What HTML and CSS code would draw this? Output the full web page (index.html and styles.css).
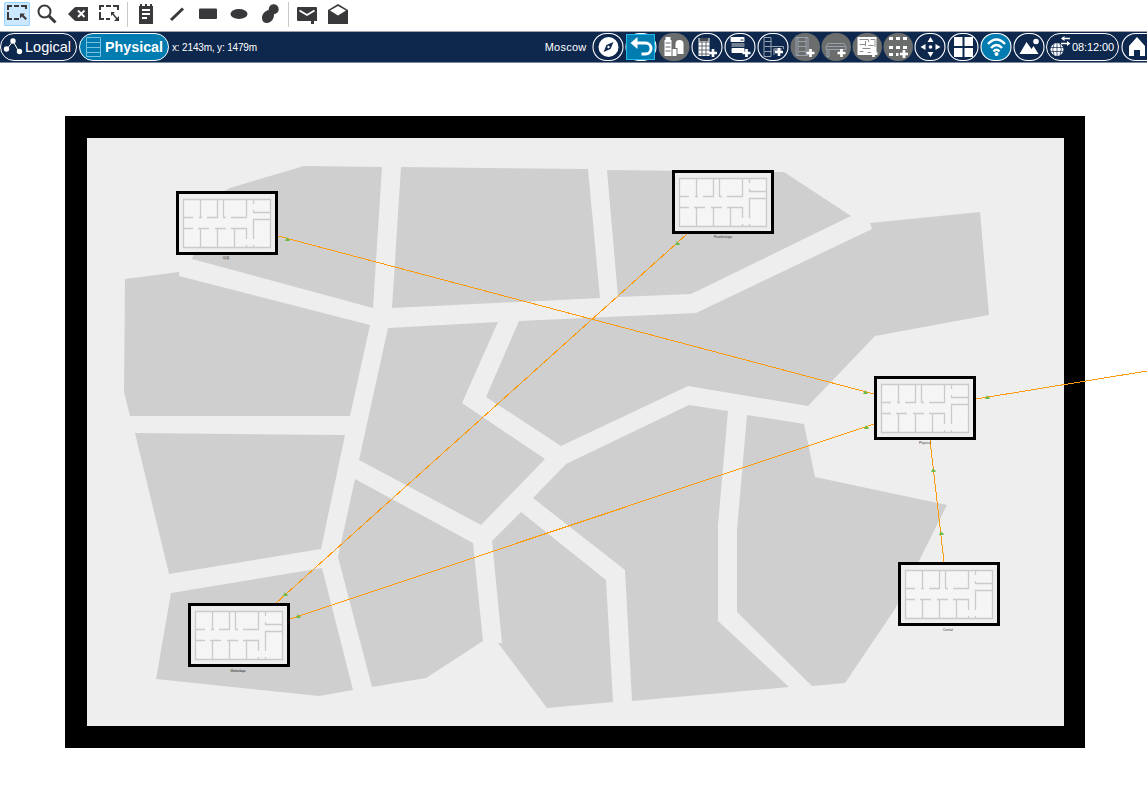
FILE: index.html
```html
<!DOCTYPE html>
<html lang="en">
<head>
<meta charset="utf-8">
<title>Physical workspace</title>
<link rel="stylesheet" href="styles.css">
</head>
<body>
<header class="tools">
  <button class="tool selected" aria-label="Select"><svg width="24" height="24" viewBox="5 2 24 24"><path class="line" d="M8 10V6H12M14 6H19M21 6H26V9M8 12V16M8 16V19H12M14 19H19"/><path class="dark" d="M20 13.5H25L23.5 15L27 18.5L25.5 20L22 16.5L20 18.5Z"/></svg></button>
  <button class="tool" aria-label="Inspect"><svg width="24" height="24" viewBox="35 2 24 24"><circle class="line" cx="44.5" cy="11.5" r="6"/><path class="line thick" d="M49 16L55.5 22.5"/></svg></button>
  <button class="tool" aria-label="Delete"><svg width="24" height="24" viewBox="66 2 24 24"><path class="dark" d="M68 14L74 8Q75 7 76 7H88V21H76Q75 21 74 20Z"/><path class="cut" d="M78 10.5L84.500 17M84.500 10.500L78 17"/></svg></button>
  <button class="tool" aria-label="Resize"><svg width="24" height="24" viewBox="97 2 24 24"><path class="line" d="M100 10V6H104M106 6H111M113 6H118V10M100 12V19H104M106 19H110"/><path class="line fine" d="M112.500 13.500L117.500 19.500"/><path class="dark" d="M111 12H115L111 16ZM119 21H114L119 16Z"/></svg></button>
  <i class="divider"></i>
  <button class="tool" aria-label="Place note"><svg width="24" height="24" viewBox="134 2 24 24"><path class="dark" d="M139 6H140V4H142V6H145V4H147V6H150V4H152V6H153V24H139Z"/><path class="cut" d="M142 10H150M142 14H150M142 18H147"/></svg></button>
  <button class="tool" aria-label="Draw line"><svg width="24" height="24" viewBox="165 2 24 24"><path class="line thick" d="M171 20L183 8.500"/></svg></button>
  <button class="tool" aria-label="Draw rectangle"><svg width="24" height="24" viewBox="196 2 24 24"><rect class="dark" x="199" y="8.500" width="18" height="10.500" rx="1"/></svg></button>
  <button class="tool" aria-label="Draw ellipse"><svg width="24" height="24" viewBox="227 2 24 24"><ellipse class="dark" cx="239" cy="14" rx="8.500" ry="5"/></svg></button>
  <button class="tool" aria-label="Draw freeform"><svg width="24" height="24" viewBox="257 2 24 24"><ellipse class="dark" cx="267" cy="16.500" rx="5.500" ry="7" transform="rotate(35 267 16.500)"/><circle class="dark" cx="272.700" cy="9.300" r="5"/></svg></button>
  <i class="divider"></i>
  <button class="tool" aria-label="Add simple PDU"><svg width="24" height="24" viewBox="295 2 24 24"><path class="dark" d="M298 7H316Q317 7 317 8V21H314V24H311V21H298Q297 21 297 20V8Q297 7 298 7Z"/><path class="cut" d="M299.500 10.500L307 15L314.500 10.500"/></svg></button>
  <button class="tool" aria-label="Add complex PDU"><svg width="24" height="24" viewBox="326 2 24 24"><path class="dark" d="M328 10L338 4L348 10V24H328Z"/><path class="white" d="M330 10.500L338 6L346 10.500L338 15.500Z"/></svg></button>
</header>
<nav class="bar">
  <button class="tab logical"><svg width="20" height="18" viewBox="3 38 20 18"><path class="wline" d="M7 49L13 41L19 52"/><circle class="white" cx="6.500" cy="49" r="2.700"/><circle class="white" cx="13" cy="41" r="2.700"/><circle class="white" cx="19.500" cy="51.500" r="2.700"/></svg>Logical</button>
  <button class="tab physical"><svg width="15" height="20" viewBox="0 0 15 20"><path class="rack" d="M.5 .5H14.500V19.500H.5ZM1 5.500H14M1 10.500H14M1 15.500H14"/></svg>Physical</button>
  <span class="coords">x: 2143m, y: 1479m</span>
  <span class="place">Moscow</span>
  <div class="actions">
    <svg class="act" viewBox="-16.5 -15 33 30"><rect class="ring" x="-15.500" y="-13.500" width="30" height="27" rx="13.500"/><circle class="white" r="10"/><path class="navy" d="M5-5L2 2L-5 5L-2-2Z"/><circle class="white" r="1.200"/></svg>
    <svg class="act" viewBox="-16.5 -15 33 30"><rect class="ring blue" x="-15.500" y="-13.500" width="30" height="27" rx="13.500"/><rect class="focus" x="-15" y="-12.500" width="28" height="25"/><path class="back" d="M-8-4H4A5.500 5.500 0 0 1 4 7H0"/><path class="white" d="M-11-4L-4-10V2Z"/></svg>
    <svg class="act" viewBox="-16.5 -15 33 30"><rect class="off" x="-16" y="-14" width="31" height="28" rx="14"/><path class="white" d="M-9-10H-4V-7H-3V9H-10V-7H-9ZM-2 2H2V9H-2ZM1-3Q1-7 5-7Q9-7 9-3V7H3V1H1Z"/><path class="grid" d="M-9-4H-4M-9 0H-4M-9 4H-4"/></svg>
    <svg class="act" viewBox="-16.5 -15 33 30"><rect class="ring" x="-15.500" y="-13.500" width="30" height="27" rx="13.500"/><path class="white" d="M-9-9H2V9H-9Z"/><path class="fill" d="M-8-9H1V-6H-8Z"/><path class="grid" d="M-9-5H2M-9-1H2M-9 3H2M-9 7H2M-5.500-6V9M-1.500-6V9"/><path class="plus" d="M5.500 2V10M1.500 6H9.500"/></svg>
    <svg class="act" viewBox="-16.5 -15 33 30"><rect class="ring" x="-15.500" y="-13.500" width="30" height="27" rx="13.500"/><rect class="white" x="-10" y="-10" width="14" height="5" rx="1"/><rect class="dim" x="-9" y="-4" width="13" height="4"/><rect class="white" x="-9" y="1" width="13" height="5" rx="1"/><path class="navyline" d="M0-7H3"/><path class="plus" d="M6 2V10M2 6H10"/></svg>
    <svg class="act" viewBox="-16.5 -15 33 30"><rect class="ring" x="-15.500" y="-13.500" width="30" height="27" rx="13.500"/><path class="thin" d="M-9.500-9.500H-2.500V9.500H-9.500ZM-9-5.500H-2M-9-.5H-2M-9 4.500H-2M-2-.5H10V2M.5 2V8"/><rect class="dim" x="0" y="1" width="8" height="4"/><path class="plus" d="M5.500 1V9M1.500 5H9.500"/></svg>
    <svg class="act small" viewBox="-15.5 -15 31 30"><rect class="off" x="-15" y="-14" width="29.500" height="28" rx="14"/><path class="thin" d="M-9.500-9.500H2.500V8.500H-9.500ZM-7.500-9V8M.5-9V8M-7-5.500H1M-7-.5H1M-7 4.500H1"/><path class="plus" d="M5 2V10M1 6H9"/></svg>
    <svg class="act small" viewBox="-15.5 -15 31 30"><rect class="off" x="-15" y="-14" width="29.500" height="28" rx="14"/><path class="thin" d="M-8.500-3.500H7.500L9.500-.5V2.500H-10.500V-.5ZM-10-.5H9M-9.500 2V9.500H-7.500V2"/><path class="plus" d="M5 2V10M1 6H9"/></svg>
    <svg class="act small" viewBox="-15.500 -15 31 30"><rect class="off" x="-15" y="-14" width="29.500" height="28" rx="14"/><rect class="white" x="-10" y="-10" width="19" height="18"/><path class="grid light" d="M-8-7.500H1V-5M3-7.500H7.500V0M-8-2.500H-2M1-1.500H6M-5 1.500H3M-8 4.500H-4M0 5.500H4M-2-6V-1"/><path class="plus" d="M6 3V10M3 6.500H10"/></svg>
    <svg class="act small" viewBox="-15.500 -15 31 30"><rect class="off" x="-15" y="-14" width="29.500" height="28" rx="14"/><path class="dots" d="M-9.500-8.500H9M-9.500 .5H9M-9.500 7.500H0"/><path class="plus" d="M5.500 3V11M1.500 7H9.500"/></svg>
    <svg class="act" viewBox="-16.5 -15 33 30"><rect class="ring" x="-15.500" y="-13.500" width="30" height="27" rx="13.500"/><path class="white" d="M0-10L3-5H-3ZM0 10L3 5H-3ZM-10 0L-5-3V3ZM10 0L5-3V3Z"/><circle class="white" r="1.800"/></svg>
    <svg class="act" viewBox="-16.5 -15 33 30"><rect class="ring" x="-15.500" y="-13.500" width="30" height="27" rx="13.500"/><path class="white" d="M-9.500-10H-1V-1H-9.500ZM1-10H9.500V-1H1ZM-9.500 1H-1V10H-9.500ZM1 1H9.500V10H1Z"/></svg>
    <svg class="act" viewBox="-16.5 -15 33 30"><rect class="ring blue" x="-15.500" y="-13.500" width="30" height="27" rx="13.500"/><path class="wave" d="M-8.500-3Q0-12 8.500-3M-5.500 1Q0-5 5.500 1M-3 4.500Q0 1 3 4.500"/><circle class="white" cy="7" r="2"/></svg>
    <svg class="act" viewBox="-16.5 -15 33 30"><rect class="ring" x="-15.500" y="-13.500" width="30" height="27" rx="13.500"/><path class="white" d="M-10 7L-3-5L2 2L4-1L9 7Z"/><circle class="white" cx="6.500" cy="-5.500" r="2.800"/></svg>
    <button class="clock"><svg width="21" height="24" viewBox="1050 36 21 24"><circle class="white" cx="1057" cy="50.500" r="6.500"/><path class="navyline globe" d="M1051 48.500H1063M1051 52.500H1063M1057 44V57M1054 45Q1051.500 50.500 1054 56M1060 45Q1062.500 50.500 1060 56"/><path class="arrows" d="M1062 39.500H1070M1061 44.500H1068"/><path class="white" d="M1061 39.500L1064.500 37V42ZM1070.500 44.500L1067 42V47Z"/></svg>08:12:00</button>
    <svg class="home" viewBox="1121 32 26 30"><rect class="ring" x="1122" y="33.500" width="40" height="27" rx="13.500"/><path class="white" d="M1129 46L1137 37L1145 46V56H1140V50H1134V56H1129Z"/></svg>
  </div>
</nav>
<main>
<svg class="map" viewBox="0 63 1147 724">
  <defs>
    <g id="building">
      <path d="M0 0H102V64H0Z"/><path class="paper" d="M3 3H99V61H3Z"/><path class="floor" d="M8 8H94V56H8Z"/>
      <path class="wall" d="M7.500 8.500H94.500V56.500H7.500ZM24.500 9V27M41.500 9V26.500M47.500 9V26M70.500 9V26.500M7.500 26.500H17M23 26.500H26M31 26.500H42M47 26.500H50M55 26.500H71M7.500 37.500H17M22 37.500H33M39 37.500H50M55 37.500H70.500V48M70.500 54V56M24.500 38V56M41.500 38V56M58.500 38V56M77.500 9V13M77.500 19V22M77.500 21.500H94M94 28.500H77.500V48M77.500 54V56"/>
    </g>
    <path id="arrow" class="green" d="M-2 2H2.500V0H1L0-2L-1 0Z"/>
  </defs>
  <rect x="65" y="116" width="1020" height="632"/>
  <rect class="paper" x="87" y="138" width="977" height="588"/>
  <g class="land">
    <path d="M192 259L215 196L230 188L304 166L382 167L373 308Z"/>
    <path d="M401 167L588 169L600 298L392 308Z"/>
    <path d="M607 170L784 172L851 216L691 294L618 297Z"/>
    <path d="M125 279L179 272V276L370 325L350 416H130L124 392Z"/>
    <path d="M135 433L345 435L321 549L169 574Z"/>
    <path d="M171 593L322 568L353 690L319 696L156 679Z"/>
    <path d="M388 328L498 322L462 403L545 459L481 525L359 460Z"/>
    <path d="M519 321L696 313L872 229L870 223L980 212L989 315L875 336L808 406L688 386L561 446L486 397Z"/>
    <path d="M355 479L473 543L483 641L426 678L372 687L338 557Z"/>
    <path d="M492 541L521 512L606 580L613 702L547 708L498 643H502Z"/>
    <path d="M533 498L566 464L689 405L728 411L718 525V621L789 687L632 701L625 570Z"/>
    <path d="M747 415L804 424L815 477L947 505L895 609L845 683L812 686L737 612V530Z"/>
  </g>
  <g class="cables">
    <path d="M278 236L874 394M687 234L276 603M290 619L874 424M976 399L1147 371M930 440L944 562"/>
  </g>
  <use href="#arrow" x="287" y="239"/><use href="#arrow" x="865" y="392"/><use href="#arrow" x="677" y="243"/><use href="#arrow" x="285" y="594"/><use href="#arrow" x="298" y="616"/><use href="#arrow" x="866" y="427"/><use href="#arrow" x="987" y="397"/><use href="#arrow" x="933" y="470"/><use href="#arrow" x="941" y="533"/>
  <use href="#building" x="176" y="191"/><use href="#building" x="672" y="170"/><use href="#building" x="874" y="376"/><use href="#building" x="898" y="562"/><use href="#building" x="188" y="603"/>
  <g class="names">
    <text x="226" y="259" textLength="6">ЦОД</text><text x="723" y="238" textLength="18">Paveletskaya</text><text x="925" y="444" textLength="12">Physical</text><text x="948" y="631" textLength="10">Central</text><text x="238" y="672" textLength="15">Moskovskaya</text>
  </g>
</svg>
</main>
</body>
</html>
```
FILE: styles.css
```css
* { box-sizing: border-box; }
body { margin: 0; background: #fff; font-family: "Liberation Sans", Arial, sans-serif; overflow: hidden; }
button { border: 0; padding: 0; background: none; font: inherit; color: inherit; }
svg { display: block; flex: none; }
.tools { display: flex; height: 31px; padding: 2px 0 0 4px; gap: 5px; align-items: flex-start; }
.tool { width: 26px; height: 24px; display: flex; justify-content: center; }
.tool:not(.selected) { justify-content: flex-start; }
.selected { background: #cce8ff; border-radius: 2px; box-shadow: inset 0 0 0 1px #99d1ff; }
.divider { width: 1px; height: 25px; margin-left: -1px; margin-right: 1px; background: #c8c8c8; }
.line { fill: none; stroke: #39393b; stroke-width: 2; }
.line.thick { stroke-width: 3; }
.line.fine { stroke-width: 1.5; }
.dark { fill: #39393b; }
.cut { fill: none; stroke: #fff; stroke-width: 1.8; }
.white { fill: #fff; }
.bar { display: flex; align-items: center; height: 32px; background: #0d274d; border-top: 1px solid #a0a4aa; border-bottom: 1px solid #7b8799; color: #fff; font-size: 11px; white-space: nowrap; }
.tab { display: flex; align-items: center; height: 28px; border: 1px solid #fff; border-radius: 14px; flex: none; }
.logical { width: 77px; margin-right: 2px; padding-left: 2px; gap: 2px; font-size: 14.5px; }
.physical { width: 90px; padding-left: 6px; gap: 4px; background: #007cb0; font-size: 14.3px; font-weight: bold; }
.rack { fill: none; stroke: #78c2df; }
.coords { width: 100px; margin-left: 3px; font-size: 10px; letter-spacing: -.16px; }
.place { margin-left: auto; margin-right: 5px; letter-spacing: .25px; }
.actions { display: flex; width: 555.5px; flex: none; }
.act { width: 33px; height: 30px; }
.act.small { width: 31px; }
.ring { fill: #0d274d; stroke: #fff; stroke-width: 1.1; }
.ring.blue { fill: #007cb0; }
.off { fill: #6b6c6c; }
.focus { fill: #007cb0; stroke: #23b9e9; }
.back { fill: none; stroke: #fff; stroke-width: 3; }
.navy { fill: #0d274d; }
.navyline { fill: none; stroke: #0d274d; }
.navyline.globe { stroke-width: .7; }
.grid { fill: none; stroke: #656b72; }
.grid.light { stroke: #8c8e90; }
.fill { fill: #454b53; }
.dim { fill: #727f90; }
.thin { fill: none; stroke: #98a2af; }
.plus { fill: none; stroke: #fff; stroke-width: 2.7; }
.dots { fill: none; stroke: #fff; stroke-width: 3; stroke-dasharray: 4 3; }
.wave { fill: none; stroke: #fff; stroke-width: 2.5; }
.wline { fill: none; stroke: #fff; stroke-width: 1; }
.arrows { fill: none; stroke: #fff; stroke-width: 1.5; }
.clock { display: flex; align-items: center; width: 73px; height: 28px; margin: 1px 1.5px 1px .5px; padding-left: 3px; gap: 1px; border: 1px solid #fff; border-radius: 14px; letter-spacing: -.1px; }
.home { width: 26px; height: 30px; }
.map { width: 1147px; height: 724px; }
.paper { fill: #eee; }
.floor { fill: #f5f5f5; }
.wall { fill: none; stroke: #cbcbcb; stroke-width: 1.3; }
.land { fill: #cfcfcf; }
.cables { fill: none; stroke: #ff9a0c; shape-rendering: crispEdges; }
.green { fill: #6cbb45; }
.names { font-size: 3px; fill: #333; text-anchor: middle; }
```
